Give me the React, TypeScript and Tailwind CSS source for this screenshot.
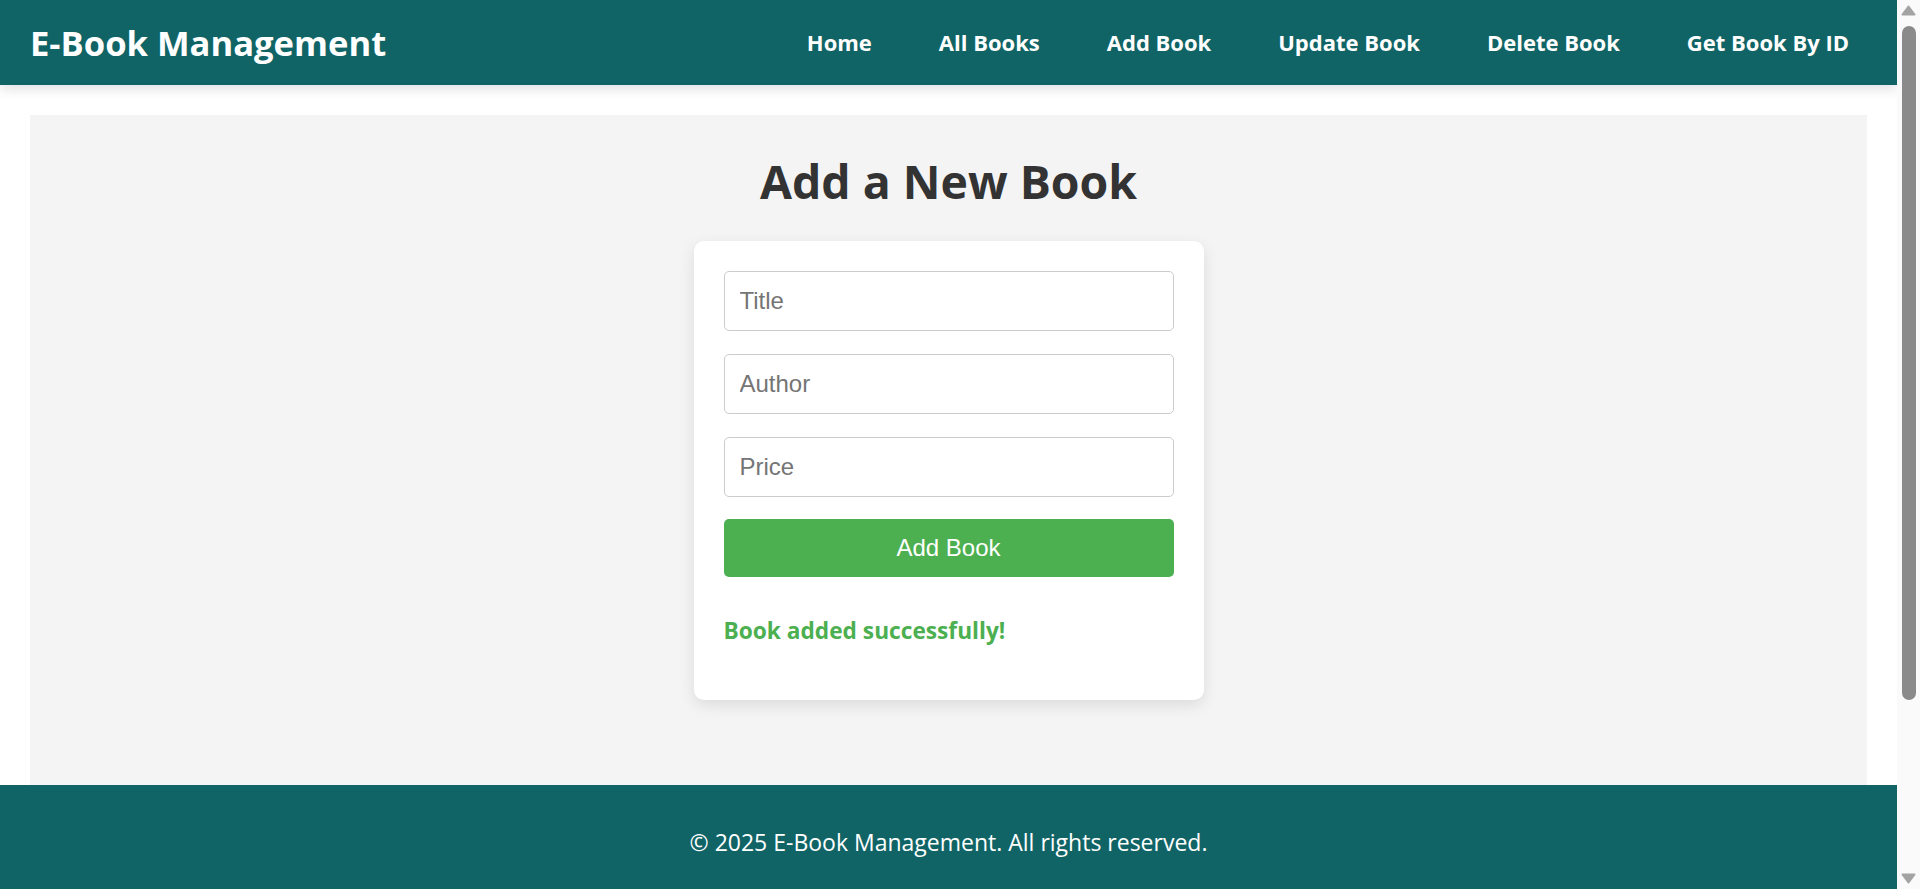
import React, { useState } from 'react';

const navLinks = [
  'Home',
  'All Books',
  'Add Book',
  'Update Book',
  'Delete Book',
  'Get Book By ID',
];

const sans = "font-['Open_Sans',sans-serif]";
const arial = "font-['Liberation_Sans',Arial,sans-serif]";
const inputClass = `h-[60px] w-full px-[15px] border border-[#ccc] rounded-[5px] text-[24px] ${arial} placeholder:text-[#757575] outline-none`;

export default function App() {
  const [title, setTitle] = useState('');
  const [author, setAuthor] = useState('');
  const [price, setPrice] = useState('');
  const [message, setMessage] = useState('Book added successfully!');

  const onSubmit = (e: React.FormEvent) => {
    e.preventDefault();
    setMessage('Book added successfully!');
    setTitle('');
    setAuthor('');
    setPrice('');
  };

  return (
    <div className={`flex h-screen bg-white ${sans}`}>
      <div className="flex-1 min-w-0 overflow-y-auto [scrollbar-width:none]">
        <header className="h-[85px] bg-[#116466] flex items-center justify-between px-[30px] shadow-[0_4px_12px_rgba(0,0,0,0.12)] relative z-10">
          <h1 className="text-[34.6px] font-bold text-white">
            E-Book Management
          </h1>
          <nav className="flex items-center gap-[31px]">
            {navLinks.map(link => (
              <a
                key={link}
                href="#"
                className="px-[18px] text-[22px] font-bold text-white"
              >
                {link}
              </a>
            ))}
          </nav>
        </header>

        <main className="mx-[30px] mt-[30px] h-[670px] bg-[#f4f4f4] flex flex-col items-center pt-[34px]">
          <h2 className="text-[46.4px] leading-[64px] font-bold text-[#333]">
            Add a New Book
          </h2>

          <div className="mt-[28px] w-[510px] bg-white rounded-[10px] p-[30px] pb-[52px] shadow-[0_5px_15px_rgba(0,0,0,0.1)]">
            <form className="flex flex-col gap-[23px]" onSubmit={onSubmit}>
              <input
                value={title}
                onChange={e => setTitle(e.target.value)}
                placeholder="Title"
                className={inputClass}
              />
              <input
                value={author}
                onChange={e => setAuthor(e.target.value)}
                placeholder="Author"
                className={inputClass}
              />
              <input
                value={price}
                onChange={e => setPrice(e.target.value)}
                placeholder="Price"
                className={inputClass}
              />
              <button
                type="submit"
                className={`-mt-[1px] h-[58px] w-full bg-[#4caf50] text-white rounded-[5px] text-[24px] ${arial}`}
              >
                Add Book
              </button>
            </form>
            {message && (
              <p className="mt-[37px] text-[22.7px] font-bold text-[#4caf50]">
                {message}
              </p>
            )}
          </div>
        </main>

        <footer className="h-[328px] bg-[#116466] pt-[40px] text-center text-[23px] text-white">
          © 2025 E-Book Management. All rights reserved.
        </footer>
      </div>

      {/* page scrollbar */}
      <div className="w-[23px] shrink-0 bg-[#fafafa] flex flex-col items-center py-[5px]">
        <svg width="15" height="11" viewBox="0 0 15 11">
          <path
            d="M7.5 1.5 L13.5 9.5 L1.5 9.5 Z"
            fill="#a3a3a3"
            stroke="#a3a3a3"
            strokeWidth="2"
            strokeLinejoin="round"
          />
        </svg>
        <div className="mt-[10px] w-[14px] h-[674px] rounded-full bg-[#8a8a8a]" />
        <div className="flex-1" />
        <svg width="15" height="11" viewBox="0 0 15 11">
          <path
            d="M1.5 1.5 L13.5 1.5 L7.5 9.5 Z"
            fill="#a3a3a3"
            stroke="#a3a3a3"
            strokeWidth="2"
            strokeLinejoin="round"
          />
        </svg>
      </div>
    </div>
  );
}
